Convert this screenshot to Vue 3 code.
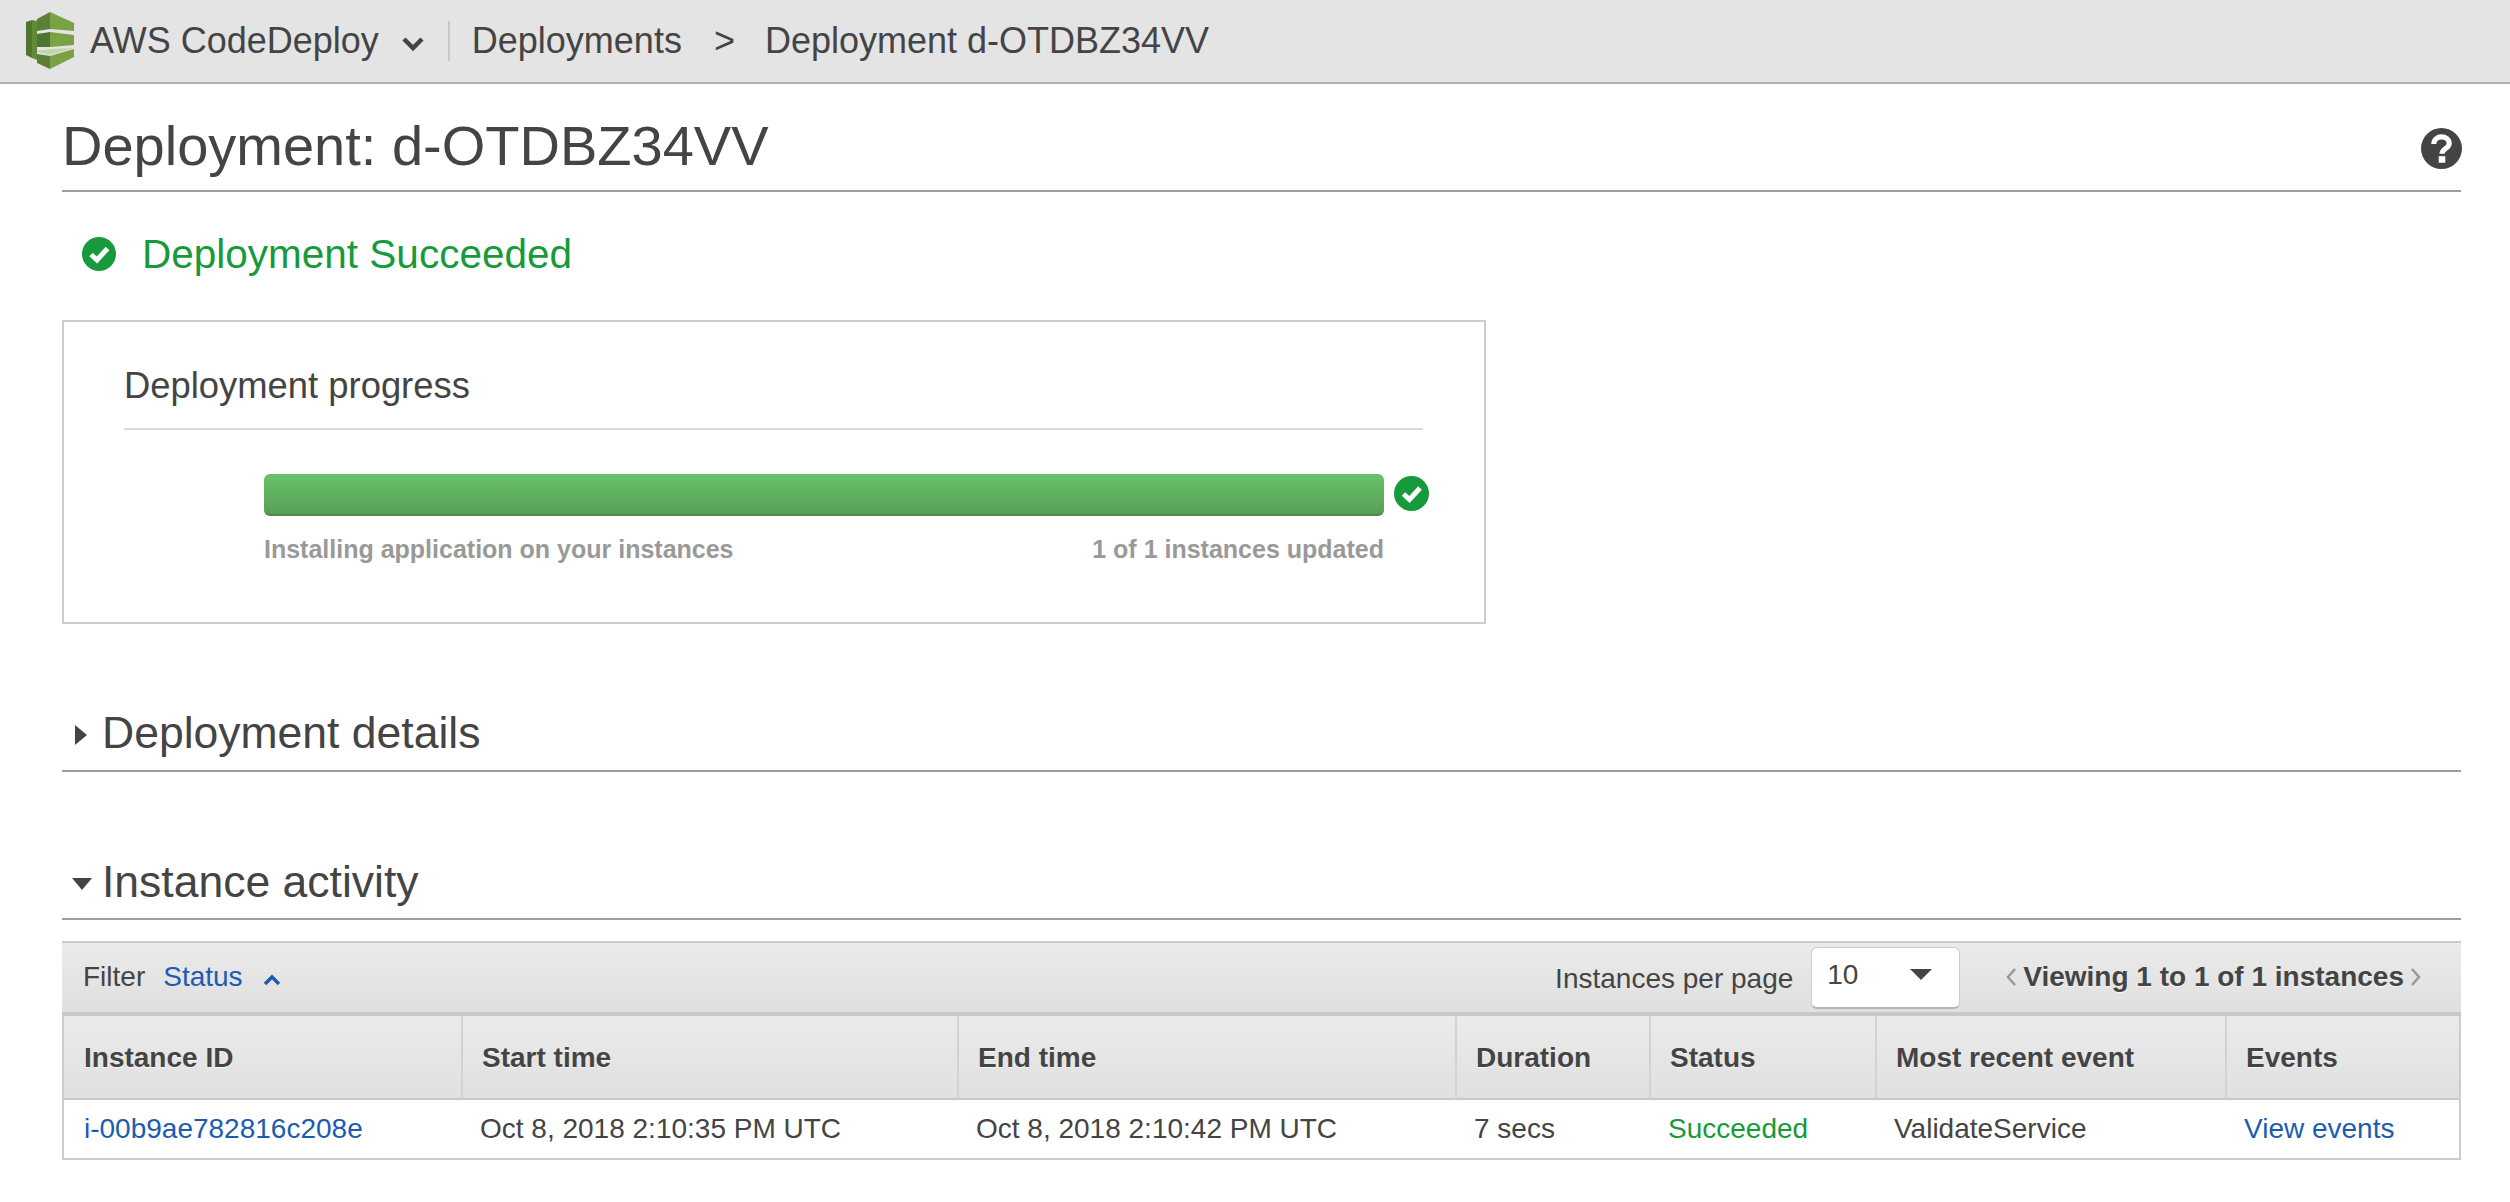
<script setup>
const columns = [
  { label: 'Instance ID', width: 397 },
  { label: 'Start time', width: 496 },
  { label: 'End time', width: 498 },
  { label: 'Duration', width: 194 },
  { label: 'Status', width: 226 },
  { label: 'Most recent event', width: 350 },
  { label: 'Events', width: 234 },
]
</script>

<template>
  <div class="page">
    <header class="topbar">
      <svg class="logo" width="48" height="58" viewBox="26 14 48 58">
        <polygon points="26,24 32,22 32,60 26,57" fill="#4f7530" />
        <polygon points="32,22 37,23 37,62 32,60" fill="#638a39" />
        <polygon points="37,21 50,14 50,31 37,33" fill="#5a7f35" />
        <polygon points="50,14 74,25 74,33 50,31" fill="#7aa244" />
        <polygon points="37,36 50,34 50,49 37,49" fill="#4f7530" />
        <polygon points="50,34 74,37 74,47 50,49" fill="#7aa244" />
        <polygon points="37,53 50,51 74,50 50,57 37,54" fill="#c3d5ab" />
        <polygon points="37,56 50,58 50,71 37,65" fill="#5a7f35" />
        <polygon points="50,58 74,51 74,59 50,71" fill="#7aa244" />
      </svg>
      <span class="service">AWS CodeDeploy</span>
      <svg class="caret" width="24" height="16" viewBox="0 0 24 16">
        <path d="M3 3 L12 12 L21 3" fill="none" stroke="#444" stroke-width="4.5" />
      </svg>
      <span class="divider"></span>
      <span class="crumb">Deployments</span>
      <span class="crumb-sep">&gt;</span>
      <span class="crumb">Deployment d-OTDBZ34VV</span>
    </header>

    <main class="content">
      <div class="title-row">
        <h1>Deployment: d-OTDBZ34VV</h1>
        <svg width="41" height="41" viewBox="0 0 40 40">
          <circle cx="20" cy="20" r="20" fill="#444" />
          <path d="M12.5 15.5 C12.5 6.5 27.5 6.5 27.5 15 C27.5 20 20.5 20 20.5 25" fill="none" stroke="#fff" stroke-width="5" />
          <rect x="17.3" y="27.5" width="6.4" height="6.4" fill="#fff" />
        </svg>
      </div>

      <div class="status-row">
        <svg width="34" height="34" viewBox="0 0 34 34">
          <circle cx="17" cy="17" r="17" fill="#169a3b" />
          <path d="M9 17.5 L15 23 L25.5 11.5" fill="none" stroke="#fff" stroke-width="5" />
        </svg>
        <span>Deployment Succeeded</span>
      </div>

      <section class="card">
        <h2>Deployment progress</h2>
        <div class="progress">
          <div class="bar-row">
            <div class="bar"></div>
            <svg width="35" height="35" viewBox="0 0 35 35">
              <circle cx="17.5" cy="17.5" r="17.5" fill="#169a3b" />
              <path d="M9.5 18 L15.5 23.5 L26 12" fill="none" stroke="#fff" stroke-width="5" />
            </svg>
          </div>
          <div class="bar-labels">
            <span>Installing application on your instances</span>
            <span>1 of 1 instances updated</span>
          </div>
        </div>
      </section>

      <div class="section-head details">
        <span class="tri-right"></span>
        <span>Deployment details</span>
      </div>

      <div class="section-head activity">
        <span class="tri-down"></span>
        <span>Instance activity</span>
      </div>

      <div class="toolbar">
        <div class="filter">
          <span>Filter</span>
          <a>Status</a>
          <svg width="18" height="12" viewBox="0 0 18 12">
            <path d="M2 10 L9 3 L16 10" fill="none" stroke="#1c5cb0" stroke-width="3.5" />
          </svg>
        </div>
        <div class="paging">
          <span class="per-page">Instances per page</span>
          <div class="select">
            <span>10</span>
            <span class="select-arrow"></span>
          </div>
          <div class="viewing">
            <svg width="12" height="20" viewBox="0 0 12 20">
              <path d="M10 2 L3 10 L10 18" fill="none" stroke="#999" stroke-width="2.5" />
            </svg>
            <b>Viewing 1 to 1 of 1 instances</b>
            <svg width="12" height="20" viewBox="0 0 12 20">
              <path d="M2 2 L9 10 L2 18" fill="none" stroke="#999" stroke-width="2.5" />
            </svg>
          </div>
        </div>
      </div>

      <table>
        <colgroup>
          <col v-for="c in columns" :key="c.label" :style="{ width: c.width + 'px' }" />
        </colgroup>
        <thead>
          <tr>
            <th v-for="c in columns" :key="c.label">{{ c.label }}</th>
          </tr>
        </thead>
        <tbody>
          <tr>
            <td><a>i-00b9ae782816c208e</a></td>
            <td>Oct 8, 2018 2:10:35 PM UTC</td>
            <td>Oct 8, 2018 2:10:42 PM UTC</td>
            <td>7 secs</td>
            <td class="ok">Succeeded</td>
            <td>ValidateService</td>
            <td><a>View events</a></td>
          </tr>
        </tbody>
      </table>
    </main>
  </div>
</template>

<style>
html, body {
  margin: 0;
  background: #fff;
}
</style>

<style scoped>
.page {
  width: 2510px;
  height: 1202px;
  overflow: hidden;
  font-family: "Liberation Sans", Arial, sans-serif;
  color: #444;
}

.topbar {
  height: 82px;
  background: #e4e4e4;
  border-bottom: 2px solid #b0b0b0;
  display: flex;
  align-items: center;
  padding-left: 26px;
  font-size: 36px;
}

.service {
  margin-left: 16px;
}

.caret {
  margin-left: 22px;
  margin-top: 6px;
}

.divider {
  width: 2px;
  height: 40px;
  background: #c8c8c8;
  margin: 0 22px 0 23px;
}

.crumb-sep {
  margin: 0 30px 0 32px;
}

.content {
  padding: 0 49px 0 62px;
}

.title-row {
  height: 106px;
  border-bottom: 2px solid #9e9e9e;
  display: flex;
  justify-content: space-between;
  align-items: flex-start;
}

.title-row svg {
  margin-top: 44px;
  margin-right: -1px;
}

h1 {
  margin: 30px 0 0;
  font-size: 56px;
  line-height: 64px;
  font-weight: 400;
}

.status-row {
  display: flex;
  align-items: center;
  gap: 26px;
  padding: 42px 0 0 20px;
  height: 40px;
  font-size: 40.5px;
  color: #169a3b;
}

.card {
  margin-top: 46px;
  width: 1424px;
  height: 304px;
  box-sizing: border-box;
  border: 2px solid #ccc;
  padding: 0 61px 0 60px;
}

h2 {
  margin: 0;
  height: 108px;
  box-sizing: border-box;
  padding-top: 44px;
  line-height: 40px;
  border-bottom: 2px solid #d8d8d8;
  font-size: 36.4px;
  font-weight: 400;
}

.progress {
  padding: 44px 0 0 140px;
}

.bar-row {
  display: flex;
  align-items: center;
  gap: 10px;
  margin-right: -10px;
}

.bar-row svg {
  margin-top: -4px;
}

.bar {
  flex: 0 0 1120px;
  height: 42px;
  box-sizing: border-box;
  border-radius: 6px;
  background: linear-gradient(#69c369, #569f56);
  border-bottom: 2px solid #4c8a4c;
}

.bar-labels {
  width: 1120px;
  display: flex;
  justify-content: space-between;
  margin-top: 19px;
  font-size: 25px;
  font-weight: 700;
  color: #999;
}

.section-head {
  display: flex;
  align-items: center;
  height: 74px;
  box-sizing: border-box;
  border-bottom: 2px solid #9e9e9e;
  font-size: 44.5px;
  margin-top: 74px;
}

.details {
  padding-bottom: 3px;
}

.tri-right {
  width: 0;
  height: 0;
  border-left: 12px solid #444;
  border-top: 10px solid transparent;
  border-bottom: 10px solid transparent;
  margin: 4px 15px 0 13px;
}

.tri-down {
  width: 0;
  height: 0;
  border-top: 12px solid #444;
  border-left: 10.5px solid transparent;
  border-right: 10.5px solid transparent;
  margin: 4px 10px 0 10px;
}

.toolbar {
  margin-top: 21px;
  height: 67px;
  padding: 0 39px 2px 21px;
  border-top: 2px solid #ccc;
  border-bottom: 4px solid #c8c8c8;
  background: linear-gradient(#eaeaea, #e0e0e0);
  display: flex;
  justify-content: space-between;
  align-items: center;
  font-size: 28px;
}

.filter {
  display: flex;
  align-items: center;
}

.filter a {
  margin: 0 20px 0 18px;
  color: #1c5cb0;
}

.filter svg {
  margin-top: 6px;
}

.paging {
  display: flex;
  align-items: center;
}

.per-page {
  margin-top: 5px;
}

.select {
  width: 149px;
  height: 62px;
  margin: 3px 45px 0 18px;
  box-sizing: border-box;
  background: #fff;
  border: 1px solid #ccc;
  border-bottom: 2px solid #b5b5b5;
  border-radius: 6px;
  padding: 0 27px 6px 15px;
  display: flex;
  justify-content: space-between;
  align-items: center;
}

.select-arrow {
  width: 0;
  height: 0;
  border-top: 11px solid #444;
  border-left: 11px solid transparent;
  border-right: 11px solid transparent;
}

.viewing {
  display: flex;
  align-items: center;
  gap: 6px;
  text-shadow: 0 1px 0 rgba(255, 255, 255, 0.7);
}

table {
  width: 2399px;
  table-layout: fixed;
  border-collapse: separate;
  border-spacing: 0;
  border-left: 2px solid #ccc;
  border-right: 2px solid #ccc;
  border-bottom: 2px solid #ccc;
}

th {
  height: 84px;
  padding: 2px 0 0 19px;
  box-sizing: border-box;
  text-align: left;
  font-size: 28px;
  font-weight: 700;
  text-shadow: 0 1px 0 rgba(255, 255, 255, 0.7);
  background: linear-gradient(#ebebeb, #e0e0e0);
  border-left: 2px solid #d2d2d2;
  border-bottom: 2px solid #c8c8c8;
}

th:first-child {
  border-left: 0;
  padding-left: 20px;
}

td {
  height: 58px;
  padding: 0 0 0 19px;
  box-sizing: border-box;
  font-size: 28px;
}

td:first-child {
  padding-left: 20px;
}

td a {
  color: #1c5cb0;
}

td.ok {
  color: #169a3b;
}
</style>
